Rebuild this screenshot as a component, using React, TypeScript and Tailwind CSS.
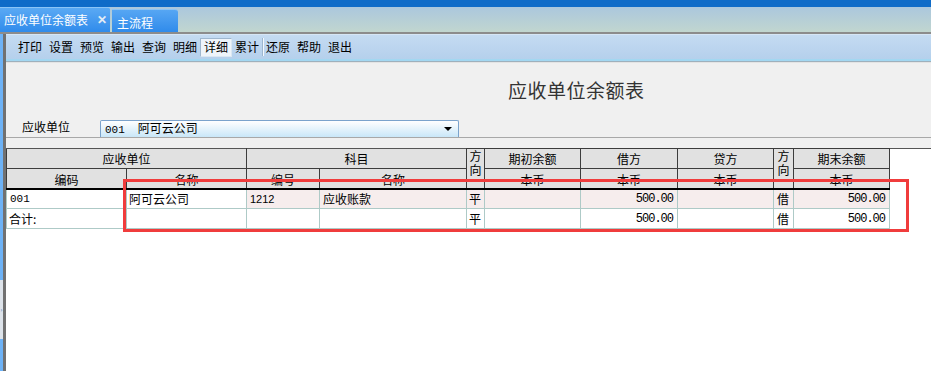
import React from "react";

const cjk = { fontFamily: '"Noto Sans CJK SC", "Liberation Sans", sans-serif' };
const mono = { fontFamily: '"Liberation Mono", "DejaVu Sans Mono", monospace' };

const tools = ["打印", "设置", "预览", "输出", "查询", "明细", "详细", "累计", "还原", "帮助", "退出"];

const Toolbar = () => (
  <div className="h-[28px] flex flex-col">
    <div className="h-[1px] bg-[#d6e6f6]" />
    <div className="flex-1 flex items-center pl-[12px] bg-gradient-to-b from-[#c4dbf2] to-[#b5d0ec] text-[12px] text-black">
      {tools.map((t) => (
        <span key={t} className="relative w-[31px] shrink-0 flex items-center h-[20px]">
          {t === "详细" ? (
            <span className="-ml-[4px] px-[3px] h-[19px] flex items-center bg-[#eef4fa] border border-[#9fb7cf] border-r-[#dbe7f2] border-b-[#dbe7f2]">
              {t}
            </span>
          ) : (
            <span>{t}</span>
          )}
          {t === "累计" && (
            <span className="absolute left-[27px] top-[1px] h-[18px] w-[2px] bg-[#f4f9fe] border-l border-[#9db6cf]" />
          )}
        </span>
      ))}
    </div>
    <div className="h-[2px] bg-[#a3d7f1]" />
    <div className="h-[1px] bg-[#9fb0bc]" />
  </div>
);

const Dir = () => (
  <div className="flex flex-col items-center text-[12px] leading-[14px]">
    <span>方</span>
    <span>向</span>
  </div>
);

const Clipped = ({ children }: { children: React.ReactNode }) => (
  <div className="h-[18px] overflow-hidden text-center pt-[3px] leading-[16px]">{children}</div>
);

const hd = "border border-[#3c3c3c] bg-[#e1e1e1] p-0 font-normal";
const cell = "border border-[#aecac7] p-0 h-[20px] align-middle";
const pink = "bg-[#f6eded]";

const Table = () => (
  <table className="table-fixed border-collapse text-[12px] text-black" style={cjk}>
    <colgroup>
      <col className="w-[120px]" />
      <col className="w-[120px]" />
      <col className="w-[73px]" />
      <col className="w-[147px]" />
      <col className="w-[18px]" />
      <col className="w-[96px]" />
      <col className="w-[97px]" />
      <col className="w-[96px]" />
      <col className="w-[20px]" />
      <col className="w-[96px]" />
    </colgroup>
    <thead>
      <tr className="h-[20px]">
        <th colSpan={2} className={hd + " border-t-[#555]"}>应收单位</th>
        <th colSpan={2} className={hd + " border-t-[#555]"}>科目</th>
        <th rowSpan={2} className={hd + " align-top border-b-2 border-b-black"}><Dir /></th>
        <th className={hd}>期初余额</th>
        <th className={hd}>借方</th>
        <th className={hd}>贷方</th>
        <th rowSpan={2} className={hd + " align-top border-b-2 border-b-black"}><Dir /></th>
        <th className={hd}>期末余额</th>
      </tr>
      <tr className="h-[20px]">
        {["编码", "名称", "编号", "名称", "本币", "本币", "本币", "本币"].map((t, i) => (
          <th key={i} className={hd + " border-b-2 border-b-black"}>
            <Clipped>{t}</Clipped>
          </th>
        ))}
      </tr>
    </thead>
    <tbody>
      <tr>
        <td className={cell + " pl-[3px] text-[11px]"} style={mono}>001</td>
        <td className={cell + " pl-[2px]"}>阿可云公司</td>
        <td className={cell + " " + pink + " pl-[3px] text-[11px]"} style={{ fontFamily: '"Liberation Sans", sans-serif' }}>1212</td>
        <td className={cell + " " + pink + " pl-[3px]"}>应收账款</td>
        <td className={cell + " " + pink + " pl-[2px]"}>平</td>
        <td className={cell + " " + pink} />
        <td className={cell + " " + pink + " text-right pr-[4px] tracking-[-1px]"} style={mono}>500.00</td>
        <td className={cell + " " + pink} />
        <td className={cell + " " + pink + " pl-[3px]"}>借</td>
        <td className={cell + " " + pink + " text-right pr-[4px] tracking-[-1px]"} style={mono}>500.00</td>
      </tr>
      <tr>
        <td className={cell + " pl-[2px]"}>合计:</td>
        <td className={cell} />
        <td className={cell} />
        <td className={cell} />
        <td className={cell + " pl-[2px]"}>平</td>
        <td className={cell} />
        <td className={cell + " text-right pr-[4px] tracking-[-1px]"} style={mono}>500.00</td>
        <td className={cell} />
        <td className={cell + " pl-[3px]"}>借</td>
        <td className={cell + " text-right pr-[4px] tracking-[-1px]"} style={mono}>500.00</td>
      </tr>
    </tbody>
  </table>
);

export default function App() {
  return (
    <div className="relative w-[931px] h-[371px] overflow-hidden bg-white flex flex-col" style={cjk}>
      <div className="h-[7px] bg-[#0f6bc8]" />
      <div className="h-[25px] flex items-end bg-gradient-to-b from-[#abc7dd] to-[#c1d6cf]">
        <div className="w-[110px] h-[25px] flex items-center pl-[4px] text-[12px] text-white bg-gradient-to-b from-[#5aa9f4] to-[#2f8beb] border-t border-[#8cc4f6] rounded-tr-[2px]">
          <span>应收单位余额表</span>
          <span className="ml-[9px] text-[12px] font-bold text-[#e4ecf4]" style={{ fontFamily: '"Liberation Sans", sans-serif' }}>✕</span>
        </div>
        <div className="ml-[2px] w-[66px] h-[23px] flex items-center pl-[5px] pt-[3px] text-[12px] text-white bg-gradient-to-b from-[#56a6f3] to-[#2f8beb] border-t border-[#8cc4f6] rounded-tr-[3px]">
          主流程
        </div>
      </div>
      <div className="h-[2px] bg-[#8c8c8c]" />
      <div className="flex-1 flex min-h-0">
        <div className="w-[3px] flex flex-col bg-[#6db2f6]">
          <div className="mt-[246px] h-[59px] bg-[#dde3ea] flex items-center justify-center text-[6px] text-[#4a78b8]">›</div>
        </div>
        <div className="w-[3px] bg-[#717171]" />
        <div className="flex-1 flex flex-col min-w-0">
          <Toolbar />
          <div className="bg-[#f0f0f0] flex flex-col">
            <div className="h-[1px] bg-[#e4e4e4]" />
            <div className="h-[40px] flex items-center pl-[502px] pt-[14px] text-[19px] text-[#333] tracking-[0.5px]">
              应收单位余额表
            </div>
            <div className="mt-[17px] h-[17px] flex items-end text-[12px] text-black">
              <span className="pl-[16px] w-[94px] pb-[1px]">应收单位</span>
              <div className="w-[359px] h-[17px] flex items-center justify-between px-[4px] rounded-t-[2px] border border-b-0 border-[#7ba3cc] bg-gradient-to-b from-white to-[#c9e7f8]">
                <span>
                  <span style={mono} className="text-[11px]">001</span>
                  <span className="ml-[13px]">阿可云公司</span>
                </span>
                <span className="w-0 h-0 border-l-[4px] border-r-[4px] border-t-[4px] border-l-transparent border-r-transparent border-t-black mr-[2px]" />
              </div>
            </div>
            <div className="h-[1px] bg-[#a8a8a8]" />
            <div className="h-[10px] bg-[#f0f0f0]" />
          </div>
          <div className="flex-1 bg-white border-t border-[#555]">
            <div className="-mt-[1px]">
              <Table />
            </div>
          </div>
        </div>
      </div>
      <div className="absolute left-[123px] top-[179px] w-[786px] h-[53px] border-[3px] border-[#f03c3c] pointer-events-none" />
    </div>
  );
}
